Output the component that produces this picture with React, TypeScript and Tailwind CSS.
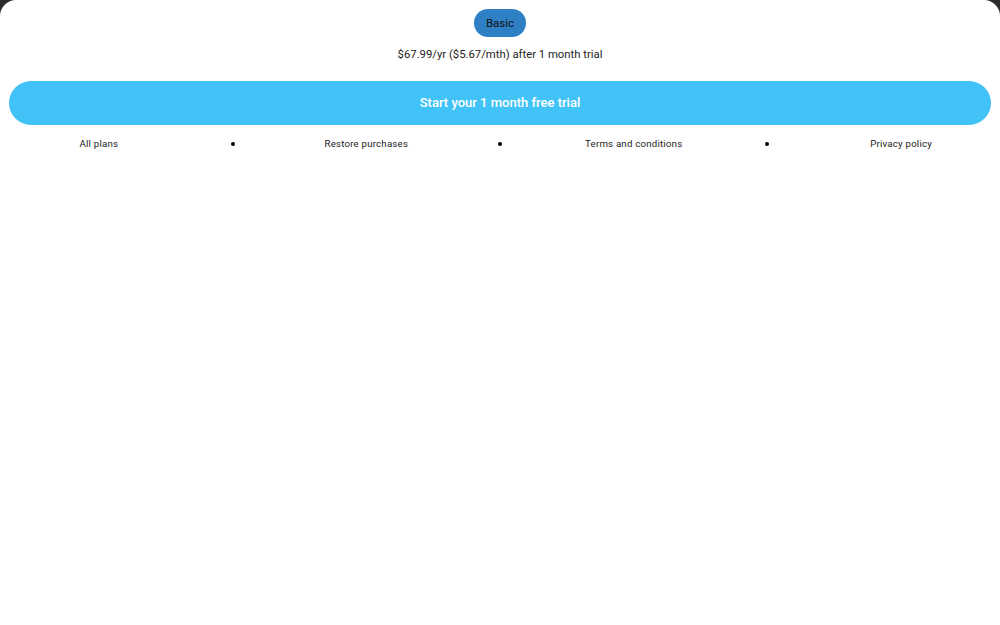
export default function App() {
  const links = ["All plans", "•", "Restore purchases", "•", "Terms and conditions", "•", "Privacy policy"];
  return (
    <div className="w-[1000px] h-[625px] bg-[#2b2b2b]" style={{ fontFamily: "Roboto, 'Liberation Sans', sans-serif" }}>
      <div className="w-full h-full bg-white rounded-t-[16px] flex flex-col items-center pt-[9px]">
        <div className="h-[28px] px-[12px] pt-[1px] rounded-full bg-[#2e7fc4] flex items-center justify-center text-[11.5px] text-[#111]">
          Basic
        </div>
        <div className="mt-[9px] h-[18px] flex items-center text-[11.3px] text-[#222]">
          $67.99/yr ($5.67/mth) after 1 month trial
        </div>
        <div className="mt-[17px] w-[982px] h-[44px] rounded-full bg-[#41c3f8] flex items-center justify-center text-white text-[13px] font-medium">
          Start your 1 month free trial
        </div>
        <div className="mt-[10px] w-[936px] grid grid-cols-7 h-[18px] items-center text-[9.7px] text-[#222] tracking-[0.2px]">
          {links.map((l, i) =>
            l === "•" ? (
              <div key={i} className="flex justify-center">
                <span className="w-[4px] h-[4px] rounded-full bg-black" />
              </div>
            ) : (
              <div key={i} className="text-center">
                {l}
              </div>
            )
          )}
        </div>
      </div>
    </div>
  );
}
